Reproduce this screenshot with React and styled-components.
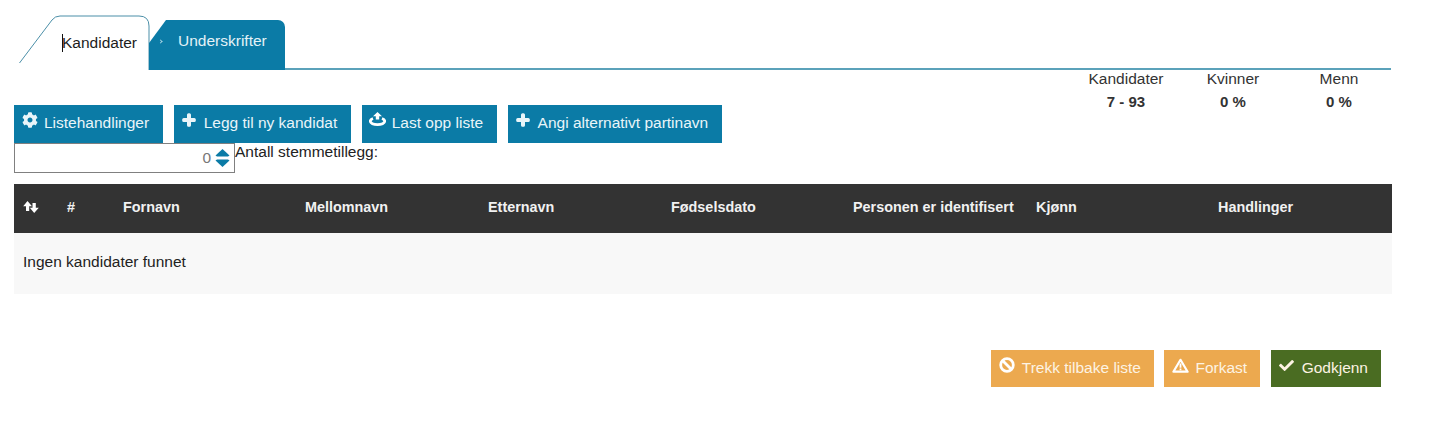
import React from "react";
import styled, { createGlobalStyle } from "styled-components";
import { FaCheck, FaCog, FaPlus } from "react-icons/fa";

const columns = [
	"Fornavn",
	"Mellomnavn",
	"Etternavn",
	"Fødselsdato",
	"Personen er identifisert",
	"Kjønn",
	"Handlinger",
];

const stats = [
	{ label: "Kandidater", value: "7 - 93", width: 108 },
	{ label: "Kvinner", value: "0 %", width: 106 },
	{ label: "Menn", value: "0 %", width: 106 },
];

const UploadIcon = () => (
	<svg width="17" height="15" viewBox="0 0 17 15">
		<path d="M8.500 0 L13 4.200 H10.200 V7.500 H6.800 V4.200 H4 Z" fill="#fff" />
		<path
			d="M4 6.500 C2 7.200 1.300 8 1.300 9.200 C1.300 11.200 4.500 12.600 8.500 12.600 C12.500 12.600 15.700 11.200 15.700 9.200 C15.700 8 15 7.200 13 6.500"
			fill="none"
			stroke="#fff"
			strokeWidth="2.800"
		/>
	</svg>
);

const WarningIcon = () => (
	<svg width="17" height="15" viewBox="0 0 17 15">
		<path
			d="M8.500 1.800 L15.600 13.700 H1.400 Z"
			fill="none"
			stroke="#fff"
			strokeWidth="2.200"
			strokeLinejoin="round"
		/>
		<path d="M7.600 5.500 H9.400 V9.800 H7.600 Z M7.600 10.500 H9.400 V12.200 H7.600 Z" fill="#fff" />
	</svg>
);

const BanIcon = () => (
	<svg width="16" height="16" viewBox="0 0 16 16">
		<circle cx="8" cy="8" r="6.300" fill="none" stroke="#fff" strokeWidth="2.800" />
		<path d="M3.500 3.500 L12.500 12.500" stroke="#fff" strokeWidth="2.800" />
	</svg>
);

const SortIcon = () => (
	<svg width="16" height="12" viewBox="0 0 16 12">
		<path d="M4.500 0 L9 5.200 H6.200 V10 H3 V5.200 H0.200 Z" fill="#fff" />
		<path d="M11.200 12 L6.800 6.800 H9.500 V2 H12.800 V6.800 H15.800 Z" fill="#fff" />
	</svg>
);

const SpinnerIcon = () => (
	<svg width="15" height="20" viewBox="0 0 15 20">
		<path d="M7.500 1 L14.500 7.500 L13 8.500 H2 L0.500 7.500 Z" fill="#0b7ba6" />
		<path d="M7.500 19 L14.500 12.500 L13 11.500 H2 L0.500 12.500 Z" fill="#0b7ba6" />
	</svg>
);

const App = () => {
	return (
		<Page>
			<GlobalStyle />
			<TabBar>
				<ActiveTab>
					<ActiveTabShape viewBox="0 0 131 55" width="131" height="55">
						<path
							d="M0.500 48 L33 5 Q36 1 41 1 L120 1 Q130 1 130 11 L130 55"
							fill="#fff"
							stroke="#4b8fa8"
							strokeWidth="1"
						/>
					</ActiveTabShape>
					<ActiveTabLabel>Kandidater</ActiveTabLabel>
				</ActiveTab>
				<InactiveTab>
					<TabChevron />
					Underskrifter
				</InactiveTab>
			</TabBar>

			<Content>
				<ToolRow>
					<ToolColumn>
						<ButtonRow>
							<BlueButton>
								<IconSlot>
									<FaCog size={16} />
								</IconSlot>
								Listehandlinger
							</BlueButton>
							<BlueButton>
								<IconSlot>
									<BoldPlus size={14} />
								</IconSlot>
								Legg til ny kandidat
							</BlueButton>
							<BlueButton>
								<IconSlot>
									<UploadIcon />
								</IconSlot>
								Last opp liste
							</BlueButton>
							<BlueButton>
								<IconSlot>
									<BoldPlus size={14} />
								</IconSlot>
								Angi alternativt partinavn
							</BlueButton>
						</ButtonRow>
						<FieldRow>
							<NumberBox>
								<NumberValue>0</NumberValue>
								<SpinnerIcon />
							</NumberBox>
							<FieldLabel>Antall stemmetillegg:</FieldLabel>
						</FieldRow>
					</ToolColumn>
					<StatsRow>
						{stats.map((stat) => (
							<Stat key={stat.label} $width={stat.width}>
								<StatLabel>{stat.label}</StatLabel>
								<StatValue>{stat.value}</StatValue>
							</Stat>
						))}
					</StatsRow>
				</ToolRow>

				<TableHead>
					<HeadCell>
						<SortIcon />
					</HeadCell>
					<HeadCell>#</HeadCell>
					{columns.map((column) => (
						<HeadCell key={column}>{column}</HeadCell>
					))}
				</TableHead>
				<EmptyRow>Ingen kandidater funnet</EmptyRow>

				<Footer>
					<ActionButton $color="#eca94f">
						<IconSlot>
							<BanIcon />
						</IconSlot>
						Trekk tilbake liste
					</ActionButton>
					<ActionButton $color="#eca94f">
						<IconSlot>
							<WarningIcon />
						</IconSlot>
						Forkast
					</ActionButton>
					<ActionButton $color="#4a6c22">
						<IconSlot>
							<FaCheck size={15} />
						</IconSlot>
						Godkjenn
					</ActionButton>
				</Footer>
			</Content>
		</Page>
	);
};

const GlobalStyle = createGlobalStyle`
	html, body {
		margin: 0;
		background: #fff;
	}
	body {
		font-family: "Liberation Sans", Arial, sans-serif;
		font-size: 15.500px;
		color: #222;
	}
`;

const Page = styled.div`
	width: 1440px;
	height: 429px;
	overflow: hidden;
`;

const TabBar = styled.div`
	display: flex;
	align-items: flex-end;
	box-sizing: border-box;
	height: 70px;
	margin-right: 49px;
	padding-left: 19px;

	&::after {
		content: "";
		flex: 1;
		height: 2px;
		background: #5ba2ba;
	}
`;

const ActiveTab = styled.div`
	position: relative;
	width: 130px;
	height: 55px;
`;

const ActiveTabShape = styled.svg`
	position: absolute;
	left: 0;
	top: 0;
`;

const ActiveTabLabel = styled.span`
	position: absolute;
	left: 43px;
	top: 19px;
	line-height: 18px;
	border-left: 1px solid #111;
	text-indent: -1px;
	color: #1c1c1c;
`;

const InactiveTab = styled.div`
	position: relative;
	display: flex;
	align-items: flex-start;
	box-sizing: border-box;
	width: 136px;
	height: 50px;
	padding: 12px 0 0 29px;
	background: #0b7ba6;
	color: #e4f2f7;
	border-radius: 0 7px 0 0;
	clip-path: polygon(0 23px, 17px 0, 100% 0, 100% 100%, 0 100%);
`;

const TabChevron = styled.i`
	position: absolute;
	left: 10px;
	top: 20px;
	width: 2px;
	height: 2px;
	border-top: 1px solid #a9d4e4;
	border-right: 1px solid #a9d4e4;
	transform: rotate(45deg);
`;

const Content = styled.div`
	width: 1378px;
	margin-left: 14px;
`;

const ToolRow = styled.div`
	display: flex;
	justify-content: space-between;
	height: 114px;
`;

const ToolColumn = styled.div`
	padding-top: 35px;
`;

const ButtonRow = styled.div`
	display: flex;
	gap: 11px;
`;

const BoldPlus = styled(FaPlus)`
	stroke-width: 50px;
`;

const IconSlot = styled.span`
	display: flex;
	flex: none;
	justify-content: center;
	width: 15px;
	margin: -7px 7px 0 0;

	svg {
		flex: none;
	}
`;

const BlueButton = styled.div`
	display: flex;
	align-items: center;
	box-sizing: border-box;
	height: 38px;
	padding: 0 13.500px 2px 8px;
	background: #0b7ba6;
	color: #e9f5f9;
	white-space: nowrap;
`;

const FieldRow = styled.div`
	display: flex;
	align-items: flex-start;
`;

const NumberBox = styled.div`
	display: flex;
	align-items: center;
	justify-content: flex-end;
	gap: 4px;
	box-sizing: border-box;
	width: 221px;
	height: 30px;
	padding-right: 4px;
	border: 1px solid #808080;
	background: #fff;
`;

const NumberValue = styled.span`
	color: #777;
`;

const FieldLabel = styled.span`
	line-height: 18px;
	color: #222;
`;

const StatsRow = styled.div`
	display: flex;
`;

const Stat = styled.div`
	width: ${({ $width }) => $width}px;
	text-align: center;
`;

const StatLabel = styled.div`
	margin-top: -1px;
	line-height: 20px;
	color: #333;
`;

const StatValue = styled.div`
	margin-top: 3px;
	line-height: 20px;
	font-weight: 700;
	font-size: 15px;
	color: #333;
`;

const TableHead = styled.div`
	display: grid;
	grid-template-columns: 44px 56px 182px 183px 183px 182px 183px 182px 1fr;
	align-items: center;
	box-sizing: border-box;
	height: 49px;
	padding: 0 0 4px 9px;
	background: #333;
`;

const HeadCell = styled.div`
	display: flex;
	font-size: 14.400px;
	font-weight: 700;
	color: #f1f1f1;
	white-space: nowrap;
`;

const EmptyRow = styled.div`
	display: flex;
	align-items: center;
	box-sizing: border-box;
	height: 61px;
	padding: 0 0 4px 9px;
	background: #f8f8f8;
	color: #222;
`;

const Footer = styled.div`
	display: flex;
	justify-content: flex-end;
	gap: 10.500px;
	margin-top: 56px;
	padding-right: 11px;
`;

const ActionButton = styled.div`
	display: flex;
	align-items: center;
	box-sizing: border-box;
	height: 37px;
	padding: 0 13px 2px 8px;
	background: ${({ $color }) => $color};
	color: #fdf3e3;
	white-space: nowrap;

	${IconSlot} {
		width: 16px;
		margin-top: -5px;
	}
`;

export default App;
